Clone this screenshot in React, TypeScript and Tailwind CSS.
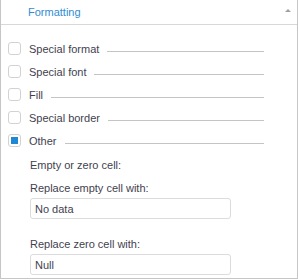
import React from "react";

interface Option {
  label: string;
  checked: boolean;
}

const options: Option[] = [
  { label: "Special format", checked: false },
  { label: "Special font", checked: false },
  { label: "Fill", checked: false },
  { label: "Special border", checked: false },
  { label: "Other", checked: true },
];

function CheckRow({ label, checked }: Option) {
  return (
    <div className="flex h-[23px] items-center pl-[7px] pr-[33px]">
      <span className="flex h-[13px] w-[13px] shrink-0 items-center justify-center rounded-[3px] border border-[#d2d2d2] bg-white">
        {checked && <span className="h-[7px] w-[7px] bg-[#1e88d2]" />}
      </span>
      <span className="ml-[8px] whitespace-nowrap">{label}</span>
      <span className="ml-[8px] mt-[5px] h-px flex-1 bg-[#c4c4c4]" />
    </div>
  );
}

function TextField({ value }: { value: string }) {
  return (
    <div className="ml-[29px] flex h-[21px] w-[201px] items-center rounded-[3px] border border-[#dcdcdc] bg-white px-[4px]">
      {value}
    </div>
  );
}

export default function App() {
  return (
    <div
      className="h-[279px] w-[298px] border-b border-l border-r border-[#c6c6c6] bg-white text-[11px] leading-[14px] text-[#3f3f4f]"
      style={{ fontFamily: '"Liberation Sans", Arial, sans-serif' }}
    >
      {/* header */}
      <div className="flex h-[25px] items-center justify-between border-b border-[#d8d8d8] pl-[27px] pr-[6px]">
        <span className="text-[#2f8cd3]">Formatting</span>
        <span className="mb-[3px] h-0 w-0 border-x-[3px] border-b-[3px] border-x-transparent border-b-[#a0a0a0]" />
      </div>

      {/* options */}
      <div className="mt-[12px]">
        {options.map((o) => (
          <CheckRow key={o.label} label={o.label} checked={o.checked} />
        ))}
      </div>

      {/* other settings */}
      <div className="mt-[6px] pl-[29px]">Empty or zero cell:</div>
      <div className="mt-[9px] pl-[29px]">Replace empty cell with:</div>
      <div className="mt-[3px]">
        <TextField value="No data" />
      </div>
      <div className="mt-[18px] pl-[29px]">Replace zero cell with:</div>
      <div className="mt-[3px]">
        <TextField value="Null" />
      </div>
    </div>
  );
}
